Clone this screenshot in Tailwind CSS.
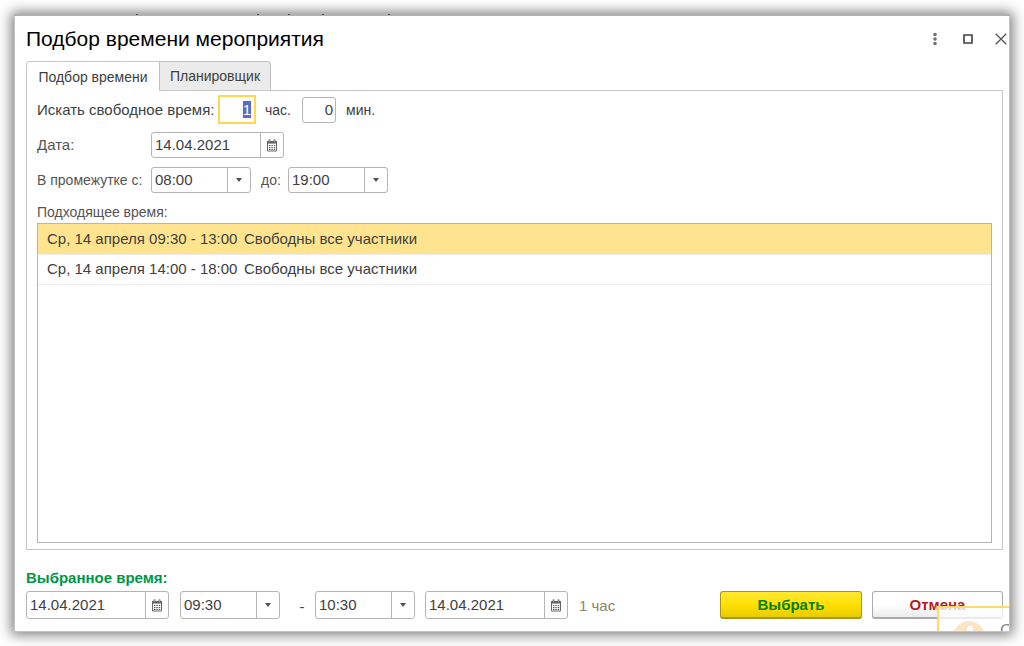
<!DOCTYPE html>
<html lang="ru">
<head>
<meta charset="utf-8">
<meta name="viewport" content="width=device-width, initial-scale=1">
<title>Подбор времени мероприятия</title>
<script src="https://cdn.jsdelivr.net/npm/@tailwindcss/browser@4"></script>
</head>
<body class="bg-white font-['Liberation_Sans',Arial,sans-serif] text-[15px] leading-5 text-[#404040]">
<svg class="hidden" aria-hidden="true">
  <symbol id="calendar" viewBox="0 0 12 13">
    <path d="M1.500 2.500h9v9.500h-9z" fill="#fff" stroke="#666"/>
    <path d="M1 2h10v2.600H1z" fill="#666"/>
    <path d="M3.500 .5v2.500M8.500 .5v2.500" stroke="#505050" stroke-width="1.800"/>
    <path d="M3.500 1.300v1.500M8.500 1.300v1.500" stroke="#eee" stroke-width=".7"/>
    <path d="M3 6.500h6.200M3 8.500h6.200M3 10.400h6.200" stroke="#505050" stroke-width="1.100" stroke-dasharray="1.400 1"/>
  </symbol>
  <symbol id="arrow" viewBox="0 0 6 4"><path d="M0 0h6L3 4z" fill="#505050"/></symbol>
</svg>
<div class="flex min-h-screen pt-[15px] pr-[14px] pb-[14px] pl-[14px]">
  <main class="relative flex min-w-0 flex-1 flex-col border border-[#c4c4c4] bg-white pr-[6px] pb-3 pl-[11px] shadow-[0_0_12px_3px_rgba(0,0,0,0.5)]">
    <div class="absolute -top-[2px] -right-px -left-px h-[2px] bg-[#b0b0b0]" aria-hidden="true">
      <i class="absolute left-[122px] h-px w-[2px] bg-[#555]"></i>
      <i class="absolute left-[243px] h-px w-[2px] bg-[#555]"></i>
      <i class="absolute left-[274px] h-px w-[2px] bg-[#555]"></i>
      <i class="absolute left-[308px] h-px w-[2px] bg-[#555]"></i>
      <i class="absolute left-[374px] h-px w-[2px] bg-[#555]"></i>
    </div>

    <header class="flex h-[45px] items-center justify-between">
      <h1 class="text-[21px] leading-6 text-black">Подбор времени мероприятия</h1>
      <div class="-mr-[6px] flex items-center gap-[17px]">
        <button type="button" aria-label="Ещё" class="flex size-4 items-center justify-center"><svg class="h-[14px] w-4" viewBox="0 0 16 14" fill="#707070"><circle cx="8" cy="2.500" r="1.800"/><circle cx="8" cy="7" r="1.800"/><circle cx="8" cy="11.500" r="1.800"/></svg></button>
        <button type="button" aria-label="Развернуть" class="flex size-4 items-center justify-center"><svg class="size-[10px]" viewBox="0 0 10 10"><path d="M1 1h8v8H1z" fill="none" stroke="#404040" stroke-width="1.600"/></svg></button>
        <button type="button" aria-label="Закрыть" class="flex size-4 items-center justify-center"><svg class="size-3" viewBox="0 0 12 12"><path d="M.7 .7l10.600 10.600M11.300 .7L.7 11.300" stroke="#555" stroke-width="1.300"/></svg></button>
      </div>
    </header>

    <div role="tablist" class="relative flex h-[29px] items-stretch text-sm">
      <button type="button" role="tab" aria-selected="true" class="-mb-px w-[133px] rounded-tl-sm border border-r-0 border-b-0 border-[#c8c8c8] bg-white">Подбор времени</button>
      <button type="button" role="tab" aria-selected="false" class="w-28 rounded-tr-sm border border-b-0 border-[#c0c0c0] bg-[#ebebeb]">Планировщик</button>
    </div>

    <section class="flex flex-1 flex-col border border-[#c8c8c8] px-[10px] pt-1 pb-[6px]">
      <div class="flex h-[29px] items-center">
        <label for="hours" class="w-[181px]">Искать свободное время:</label>
        <input id="hours" value="1" class="h-[29px] w-[38px] border-2 border-[#ffd750] pr-[3px] text-right outline-none selection:bg-[#566bc3] selection:text-white">
        <label for="hours" class="w-[46px] pl-[9px] text-sm">час.</label>
        <input id="minutes" value="0" class="h-[26px] w-[34px] rounded-[3px] border border-[#b5b5b5] pr-[2px] text-right">
        <label for="minutes" class="ml-[10px] text-sm">мин.</label>
      </div>
      <div class="mt-2 flex items-center">
        <label for="date" class="w-[114px] text-[#555]">Дата:</label>
        <div class="flex h-[26px] w-[133px] rounded-[3px] border border-[#b5b5b5]">
          <input id="date" value="14.04.2021" class="min-w-0 flex-1 pl-[3px]">
          <button type="button" aria-label="Выбрать дату" class="flex w-[23px] items-center justify-center border-l border-[#b5b5b5]"><svg class="h-[13px] w-3"><use href="#calendar"/></svg></button>
        </div>
      </div>
      <div class="mt-[9px] flex items-center">
        <label for="from" class="w-[114px] text-sm whitespace-nowrap text-[#555]">В промежутке с:</label>
        <div class="grid h-[26px] w-[100px] rounded-[3px] border border-[#b5b5b5]">
          <select id="from" class="col-start-1 row-start-1 appearance-none pl-[3px]"><option>08:00</option></select>
          <span class="pointer-events-none col-start-1 row-start-1 flex w-[23px] items-center justify-center justify-self-end border-l border-[#b5b5b5]"><svg class="h-1 w-[6px]"><use href="#arrow"/></svg></span>
        </div>
        <label for="to" class="w-[37px] pl-[10px] text-sm text-[#555]">до:</label>
        <div class="grid h-[26px] w-[100px] rounded-[3px] border border-[#b5b5b5]">
          <select id="to" class="col-start-1 row-start-1 appearance-none pl-[3px]"><option>19:00</option></select>
          <span class="pointer-events-none col-start-1 row-start-1 flex w-[23px] items-center justify-center justify-self-end border-l border-[#b5b5b5]"><svg class="h-1 w-[6px]"><use href="#arrow"/></svg></span>
        </div>
      </div>
      <h2 id="slots" class="mt-[9px] text-sm leading-5 text-[#555]">Подходящее время:</h2>
      <div class="mt-px flex-1 border border-[#b5b5b5]">
        <table aria-labelledby="slots" class="w-full border-collapse">
          <tbody>
            <tr class="h-[30px] border-b border-[#ececec] bg-[#ffe48f]"><td class="w-[206px] pl-[9px] whitespace-nowrap">Ср, 14 апреля 09:30 - 13:00</td><td>Свободны все участники</td></tr>
            <tr class="h-[30px] border-b border-[#ececec]"><td class="w-[206px] pl-[9px] whitespace-nowrap">Ср, 14 апреля 14:00 - 18:00</td><td>Свободны все участники</td></tr>
          </tbody>
        </table>
      </div>
    </section>

    <footer class="mt-[18px]">
      <h2 class="font-bold text-[#009646]">Выбранное время:</h2>
      <div class="mt-[3px] flex items-center">
        <div class="flex h-7 w-[143px] rounded-[3px] border border-[#b5b5b5]">
          <input aria-label="Дата начала" value="14.04.2021" class="min-w-0 flex-1 pl-[3px]">
          <button type="button" aria-label="Выбрать дату начала" class="flex w-[23px] items-center justify-center border-l border-[#b5b5b5]"><svg class="h-[13px] w-3"><use href="#calendar"/></svg></button>
        </div>
        <div class="ml-[11px] grid h-7 w-[100px] rounded-[3px] border border-[#b5b5b5]">
          <select aria-label="Время начала" class="col-start-1 row-start-1 appearance-none pl-[3px]"><option>09:30</option></select>
          <span class="pointer-events-none col-start-1 row-start-1 flex w-[23px] items-center justify-center justify-self-end border-l border-[#b5b5b5]"><svg class="h-1 w-[6px]"><use href="#arrow"/></svg></span>
        </div>
        <span class="w-[35px] pt-1 pl-[9px] text-center">-</span>
        <div class="grid h-7 w-[100px] rounded-[3px] border border-[#b5b5b5]">
          <select aria-label="Время окончания" class="col-start-1 row-start-1 appearance-none pl-[3px]"><option>10:30</option></select>
          <span class="pointer-events-none col-start-1 row-start-1 flex w-[23px] items-center justify-center justify-self-end border-l border-[#b5b5b5]"><svg class="h-1 w-[6px]"><use href="#arrow"/></svg></span>
        </div>
        <div class="ml-[10px] flex h-7 w-[143px] rounded-[3px] border border-[#b5b5b5]">
          <input aria-label="Дата окончания" value="14.04.2021" class="min-w-0 flex-1 pl-[3px]">
          <button type="button" aria-label="Выбрать дату окончания" class="flex w-[23px] items-center justify-center border-l border-[#b5b5b5]"><svg class="h-[13px] w-3"><use href="#calendar"/></svg></button>
        </div>
        <span class="ml-[11px] pt-[2px] text-[#8c8464]">1 час</span>
        <button type="button" class="ml-auto h-7 w-[142px] rounded-[3px] border border-b-2 border-[#a89614] bg-linear-to-b from-[#ffe92e] via-[#ffe000] to-[#e8cc00] font-bold text-[#008200]">Выбрать</button>
        <button type="button" class="ml-[10px] h-7 w-[131px] rounded-[3px] border border-b-2 border-[#aaa] bg-linear-to-b from-white from-50% to-[#ececec] font-bold text-[#b41e1e]">Отмена</button>
      </div>
    </footer>

    <aside class="absolute right-0 bottom-0 flex h-[25px] w-[72px] overflow-hidden border-t-2 border-l-2 border-[#fbdc6a] bg-white/75">
      <svg class="mt-[13px] ml-[14px] h-8 w-8 shrink-0" viewBox="0 0 32 32"><circle cx="16" cy="16" r="16" fill="#fce5c4"/><circle cx="17" cy="8" r="3" fill="#fff"/><path d="M14 14h5v12h-5z" fill="#fff"/></svg>
      <span class="mt-[13px] ml-[15px] text-[17px] text-[#888]">С</span>
    </aside>
  </main>
</div>
<script>
  const hours = document.getElementById('hours');
  hours.focus();
  hours.select();
</script>
</body>
</html>
